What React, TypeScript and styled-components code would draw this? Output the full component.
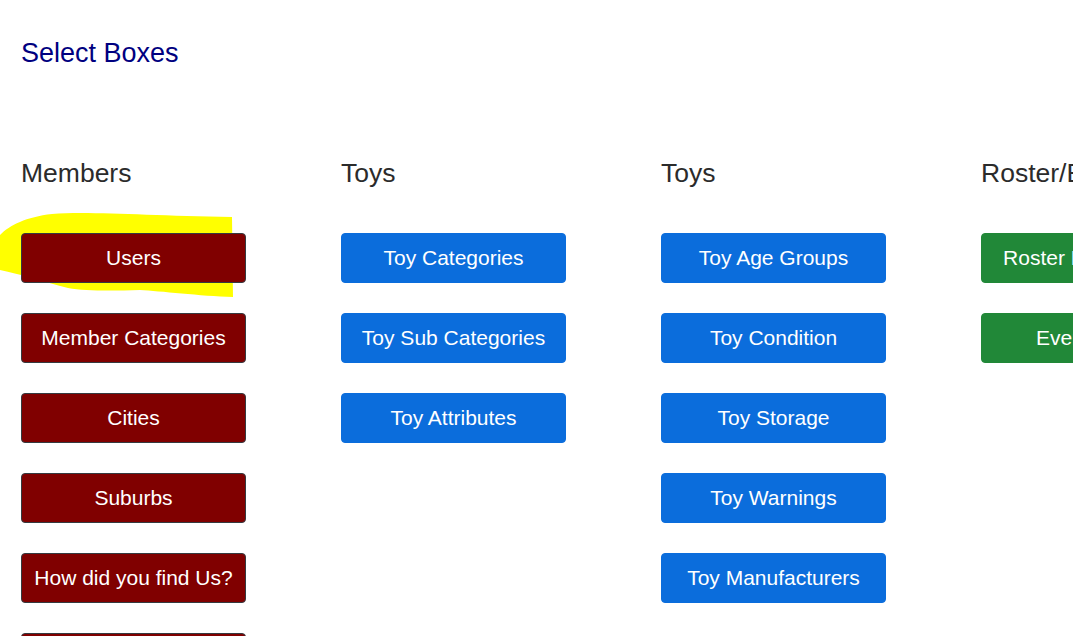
import React from 'react';
import styled, { createGlobalStyle } from 'styled-components';

type Tone = 'maroon' | 'blue' | 'green';

interface IColumn {
    title: string;
    tone: Tone;
    items: string[];
}

const toneColors: Record<Tone, { bg: string; border: string }> = {
    maroon: { bg: '#800000', border: '#343a40' },
    blue: { bg: '#0b6ddc', border: '#0b6ddc' },
    green: { bg: '#218838', border: '#218838' },
};

const columns: IColumn[] = [
    {
        title: 'Members',
        tone: 'maroon',
        items: ['Users', 'Member Categories', 'Cities', 'Suburbs', 'How did you find Us?', 'Member Status'],
    },
    {
        title: 'Toys',
        tone: 'blue',
        items: ['Toy Categories', 'Toy Sub Categories', 'Toy Attributes'],
    },
    {
        title: 'Toys',
        tone: 'blue',
        items: ['Toy Age Groups', 'Toy Condition', 'Toy Storage', 'Toy Warnings', 'Toy Manufacturers'],
    },
    {
        title: 'Roster/Events',
        tone: 'green',
        items: ['Roster Preferences', 'Event Types'],
    },
];

/**
 * @description 선택 상자 관리 화면
 */

const App = () => {
    return (
        <>
            <GlobalStyle />
            <Page>
                <Title>Select Boxes</Title>
                <ColumnGrid>
                    {columns.map((col, ci) => (
                        <Column key={ci}>
                            <ColumnTitle>{col.title}</ColumnTitle>
                            <ButtonList>
                                {col.items.map((item, ii) => (
                                    <ButtonSlot key={item}>
                                        {ci === 0 && ii === 0 && (
                                            <Highlight viewBox="0 0 234 88">
                                                <path d="M0,23 C10,13 26,5 52,2 C90,-1 150,4 232,5 L233,85 C200,84 160,79 140,78 C110,79 85,79 68,76 C45,70 20,62 0,58 Z" fill="#ffff00" />
                                            </Highlight>
                                        )}
                                        <SelectButton tone={col.tone}>{item}</SelectButton>
                                    </ButtonSlot>
                                ))}
                            </ButtonList>
                        </Column>
                    ))}
                </ColumnGrid>
            </Page>
        </>
    );
};

export default App;

const GlobalStyle = createGlobalStyle`
    html, body{
        margin: 0;
        padding: 0;
        background: #fff;
        overflow: hidden;
    }
    body{
        font-family: "Liberation Sans", Arial, sans-serif;
        width: 1073px;
        height: 636px;
    }
`

const Page = styled.div`
    padding: 36px 0 0 21px;
    height: 636px;
    box-sizing: border-box;
    overflow: hidden;
`
const Title = styled.h1`
    color: #000080;
    font-size: 27px;
    font-weight: 400;
    line-height: 34px;
    margin: 0;
`
const ColumnGrid = styled.div`
    display: grid;
    grid-template-columns: repeat(4, 225px);
    column-gap: 95px;
    margin-top: 87px;
`
const Column = styled.div`
    display: flex;
    flex-direction: column;
`
const ColumnTitle = styled.h2`
    color: #2b2b2b;
    font-size: 26.5px;
    font-weight: 400;
    line-height: 32px;
    margin: 0 0 44px;
    white-space: nowrap;
`
const ButtonList = styled.div`
    display: flex;
    flex-direction: column;
    gap: 30px;
`
const ButtonSlot = styled.div`
    position: relative;
`
const Highlight = styled.svg`
    position: absolute;
    left: -21px;
    top: -21px;
    width: 234px;
    height: 88px;
    z-index: 0;
`
const SelectButton = styled.button<{ tone: Tone }>`
    position: relative;
    z-index: 1;
    display: block;
    box-sizing: border-box;
    width: 225px;
    height: 50px;
    padding: 0 6px;
    border: 1px solid ${(props) => toneColors[props.tone].border};
    border-radius: 4px;
    background-color: ${(props) => toneColors[props.tone].bg};
    color: #fff;
    font-family: "Liberation Sans", Arial, sans-serif;
    font-size: 21px;
    white-space: nowrap;
    cursor: pointer;
`
